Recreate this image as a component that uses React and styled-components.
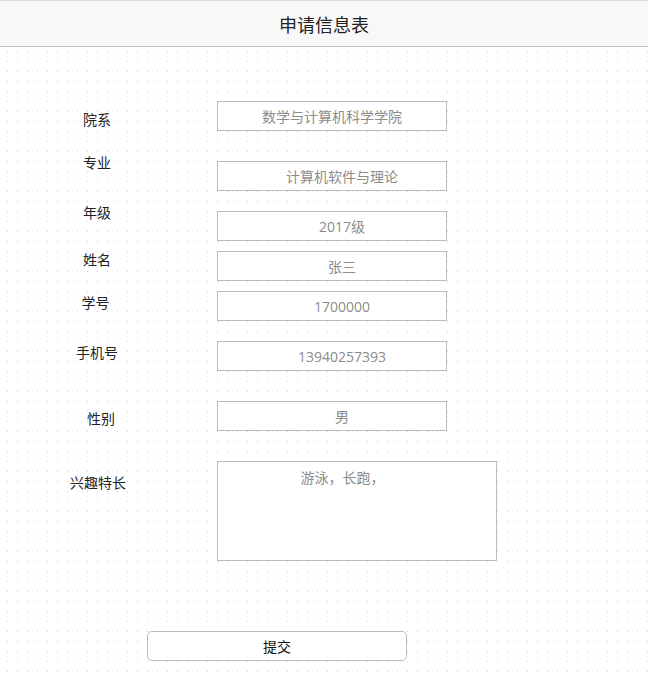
import React from 'react'
import styled, { createGlobalStyle } from 'styled-components'

const GlobalStyle = createGlobalStyle`
  html, body {
    margin: 0;
    padding: 0;
    background: #fff;
  }
  body {
    font-family: "Open Sans", "Noto Sans CJK SC", sans-serif;
    color: #222;
  }
`

const dots = "url(\"data:image/svg+xml,%3Csvg xmlns='http://www.w3.org/2000/svg' width='10' height='10'%3E%3Crect width='1' height='1' fill='%23cfcfcf'/%3E%3C/svg%3E\")"

const Page = styled.div`
  min-height: 100vh;
  background-color: #fff;
  background-image: ${dots};
  background-position: 7px 1px;
`

const Header = styled.header`
  height: 45px;
  border-top: 1px solid #dcdcdc;
  border-bottom: 1px solid #c4c4c4;
  background: #f8f8f8;
  display: flex;
  align-items: center;
  justify-content: center;
`

const Title = styled.h1`
  margin: 0;
  font-size: 18px;
  font-weight: 400;
  color: #222;
`

const Form = styled.form`
  display: flex;
  flex-direction: column;
  padding-top: 54px;
  padding-bottom: 14px;
`

const Row = styled.div`
  display: grid;
  grid-template-columns: 194px auto;
  column-gap: 23px;
  align-items: start;
  margin-top: ${p => p.$space}px;
`

const Label = styled.label`
  display: block;
  text-align: center;
  font-size: 14px;
  line-height: 20px;
  color: #222;
  margin-top: ${p => p.$offset}px;
  padding-left: ${p => (p.$shift > 0 ? p.$shift * 2 : 0)}px;
  padding-right: ${p => (p.$shift < 0 ? -p.$shift * 2 : 0)}px;
`

const Field = styled.input`
  box-sizing: border-box;
  width: 230px;
  height: 30px;
  margin: 0;
  padding: 0 0 0 ${p => p.$inset}px;
  border: 1px solid #bbb;
  background: #fff;
  font-family: "Open Sans", "Noto Sans CJK SC", sans-serif;
  font-size: 14px;
  color: #8c8c8c;
  text-align: center;
  outline: none;
`

const Area = styled.textarea`
  box-sizing: border-box;
  width: 280px;
  height: 100px;
  margin: 0;
  padding: 6px 29px 6px 0;
  border: 1px solid #bbb;
  background: #fff;
  font-family: "Open Sans", "Noto Sans CJK SC", sans-serif;
  font-size: 14px;
  line-height: 20px;
  color: #8c8c8c;
  text-align: center;
  resize: none;
  outline: none;
  display: block;
`

const Submit = styled.button`
  box-sizing: border-box;
  width: 260px;
  height: 30px;
  margin: 70px 0 0 147px;
  border: 1px solid #bbb;
  border-radius: 5px;
  background: #fff;
  font-family: "Open Sans", "Noto Sans CJK SC", sans-serif;
  font-size: 14px;
  color: #111;
  cursor: pointer;
`

const fields = [
  { label: '院系', value: '数学与计算机科学学院', space: 0, offset: 9, inset: 0, shift: 0 },
  { label: '专业', value: '计算机软件与理论', space: 30, offset: -8, inset: 20, shift: 0 },
  { label: '年级', value: '2017级', space: 20, offset: -8, inset: 20, shift: 0 },
  { label: '姓名', value: '张三', space: 10, offset: -1, inset: 20, shift: 0 },
  { label: '学号', value: '1700000', space: 10, offset: 2, inset: 20, shift: -1.5 },
  { label: '手机号', value: '13940257393', space: 20, offset: 2, inset: 20, shift: 0 },
  { label: '性别', value: '男', space: 30, offset: 8, inset: 20, shift: 4 },
]

export default function App() {
  return (
    <Page>
      <GlobalStyle />
      <Header>
        <Title>申请信息表</Title>
      </Header>
      <Form onSubmit={e => e.preventDefault()}>
        {fields.map(f => (
          <Row key={f.label} $space={f.space}>
            <Label $offset={f.offset} $shift={f.shift}>{f.label}</Label>
            <Field readOnly $inset={f.inset} value={f.value} />
          </Row>
        ))}
        <Row $space={30}>
          <Label $offset={12} $shift={1}>兴趣特长</Label>
          <Area readOnly value="游泳，长跑，" />
        </Row>
        <div>
          <Submit type="submit">提交</Submit>
        </div>
      </Form>
    </Page>
  )
}
